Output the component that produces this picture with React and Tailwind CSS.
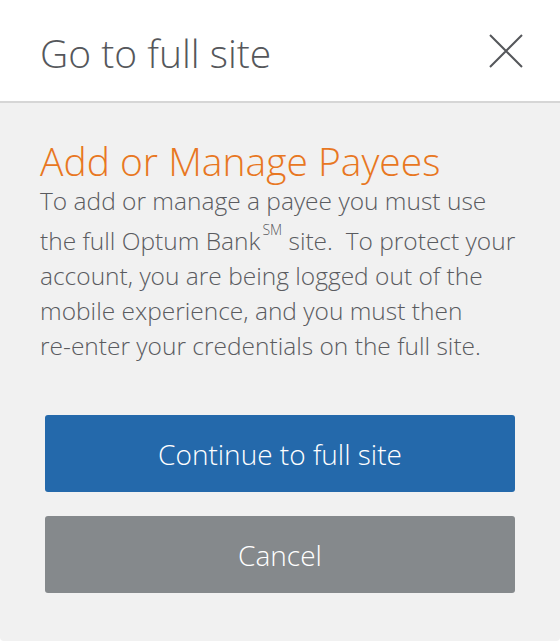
import React from 'react';

function CloseIcon() {
  return (
    <svg width="36" height="36" viewBox="0 0 36 36" className="block">
      <path d="M2 2 L34 34 M34 2 L2 34" stroke="#55575b" strokeWidth="2" fill="none" />
    </svg>
  );
}

export default function App() {
  return (
    <div
      className="w-[560px] h-[641px] bg-white flex flex-col"
      style={{ fontFamily: '"Open Sans", Lato, sans-serif' }}
    >
      {/* Header */}
      <div className="h-[103px] flex items-center justify-between pl-[40px] pr-[36px] border-b-2 border-[#d6d6d6] shrink-0">
        <h1 className="text-[39px] leading-none text-[#55575b] font-light mt-[4px]">Go to full site</h1>
        <CloseIcon />
      </div>

      {/* Body */}
      <div className="flex-1 bg-[#f1f1f1] rounded-b-[4px] px-[40px] pt-[36px]">
        <h2 className="text-[39px] leading-[44px] text-[#e87722] font-light">Add or Manage Payees</h2>
        <p className="text-[24.5px] leading-[35px] text-[#5a5b5f] font-light">
          <span className="block">To add or manage a payee you must use</span>
          <span className="block mt-[5px]">
            the full Optum Bank<sup className="text-[14px] leading-none align-[8px] ml-[2px]">SM</sup> site.&nbsp; To protect your
          </span>
          <span className="block">account, you are being logged out of the</span>
          <span className="block">mobile experience, and you must then</span>
          <span className="block">re-enter your credentials on the full site.</span>
        </p>

        <div className="flex flex-col gap-[24px] mt-[52px] px-[5px]">
          <button className="h-[77px] w-full rounded-[3px] bg-[#2469ab] text-white text-[28px] font-light">
            Continue to full site
          </button>
          <button className="h-[77px] w-full rounded-[3px] bg-[#85898c] text-white text-[28px] font-light">
            Cancel
          </button>
        </div>
      </div>
    </div>
  );
}
